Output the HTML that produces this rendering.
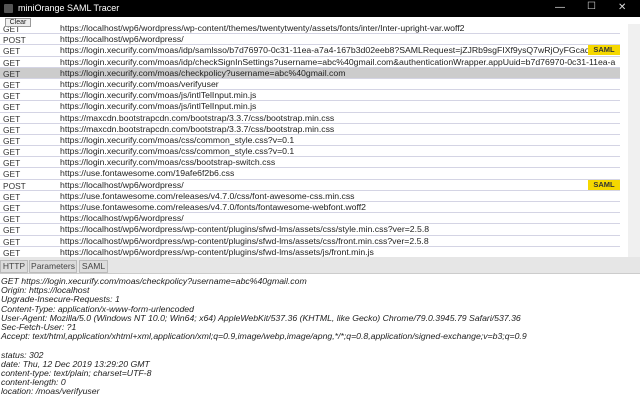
<!DOCTYPE html>
<html><head><style>
*{margin:0;padding:0;box-sizing:border-box}
body{width:640px;height:400px;overflow:hidden;background:#fff;font-family:"Liberation Sans",sans-serif;font-size:8px;color:#222;position:relative}
.title{position:absolute;left:0;top:0;width:640px;height:17px;background:#000;color:#fff;font-size:9px}
.title .ic{position:absolute;left:4px;top:4px;width:9px;height:9px;background:#555;border-radius:1px}
.title .t{position:absolute;left:18px;top:3px}
.ctl{position:absolute;top:2px;color:#ddd;font-size:10px}
.top{position:absolute;left:0;top:17px;width:640px;height:7px;background:#fff;z-index:2}
.clear{position:absolute;left:5px;top:18px;width:26px;height:9px;border:1px solid #999;background:#eee;font-size:7px;text-align:center;line-height:7px;z-index:3}
.list{position:absolute;left:0;top:23px;width:628px;height:234px;overflow:hidden}
.row{height:11.2px;border-bottom:1px solid #d4d4e4;position:relative;white-space:nowrap;width:620px;line-height:10px;overflow:hidden}
.row .m{position:absolute;left:3px;top:1px;color:#333;font-size:8.4px}
.row .u{position:absolute;left:60px;top:0;color:#222;font-size:8.7px}
.row.sel{background:#ccc}
.saml{position:absolute;right:0;top:0;width:32px;height:10px;background:#f5d800;color:#333;font-size:7.5px;text-align:center;line-height:10px;font-weight:bold}
.sb{position:absolute;left:628px;top:24px;width:12px;height:233px;background:#f0f0f0}
.tabs{position:absolute;left:0;top:257px;width:640px;height:17px;background:#e6e6e6;border-bottom:1px solid #ccc}
.tab{position:absolute;top:3px;height:13px;background:#ddd;border:1px solid #bbb;font-size:8.5px;line-height:11px;text-align:center;color:#444}
.det{position:absolute;left:1px;top:277px;font-style:italic;font-size:8.7px;line-height:9.2px;color:#222;white-space:pre}
</style></head><body>
<div class="title"><div class="ic"></div><div class="t">miniOrange SAML Tracer</div>
<div class="ctl" style="left:555px">—</div><div class="ctl" style="left:587px;top:1px">☐</div><div class="ctl" style="left:618px">✕</div></div>
<div class="top"></div>
<div class="clear">Clear</div>
<div class="list">
<div class="row"><span class="m">GET</span><span class="u">https://localhost/wp6/wordpress/wp-content/themes/twentytwenty/assets/fonts/inter/Inter-upright-var.woff2</span></div>
<div class="row"><span class="m">POST</span><span class="u">https://localhost/wp6/wordpress/</span></div>
<div class="row"><span class="m">GET</span><span class="u">https://login.xecurify.com/moas/idp/samlsso/b7d76970-0c31-11ea-a7a4-167b3d02eeb8?SAMLRequest=jZJRb9sgFIXf9ysQ7wRjOyFGcaqsU</span><span class="saml">SAML</span></div>
<div class="row"><span class="m">GET</span><span class="u">https://login.xecurify.com/moas/idp/checkSignInSettings?username=abc%40gmail.com&amp;authenticationWrapper.appUuid=b7d76970-0c31-11ea-a</span></div>
<div class="row sel"><span class="m">GET</span><span class="u">https://login.xecurify.com/moas/checkpolicy?username=abc%40gmail.com</span></div>
<div class="row"><span class="m">GET</span><span class="u">https://login.xecurify.com/moas/verifyuser</span></div>
<div class="row"><span class="m">GET</span><span class="u">https://login.xecurify.com/moas/js/intlTelInput.min.js</span></div>
<div class="row"><span class="m">GET</span><span class="u">https://login.xecurify.com/moas/js/intlTelInput.min.js</span></div>
<div class="row"><span class="m">GET</span><span class="u">https://maxcdn.bootstrapcdn.com/bootstrap/3.3.7/css/bootstrap.min.css</span></div>
<div class="row"><span class="m">GET</span><span class="u">https://maxcdn.bootstrapcdn.com/bootstrap/3.3.7/css/bootstrap.min.css</span></div>
<div class="row"><span class="m">GET</span><span class="u">https://login.xecurify.com/moas/css/common_style.css?v=0.1</span></div>
<div class="row"><span class="m">GET</span><span class="u">https://login.xecurify.com/moas/css/common_style.css?v=0.1</span></div>
<div class="row"><span class="m">GET</span><span class="u">https://login.xecurify.com/moas/css/bootstrap-switch.css</span></div>
<div class="row"><span class="m">GET</span><span class="u">https://use.fontawesome.com/19afe6f2b6.css</span></div>
<div class="row"><span class="m">POST</span><span class="u">https://localhost/wp6/wordpress/</span><span class="saml">SAML</span></div>
<div class="row"><span class="m">GET</span><span class="u">https://use.fontawesome.com/releases/v4.7.0/css/font-awesome-css.min.css</span></div>
<div class="row"><span class="m">GET</span><span class="u">https://use.fontawesome.com/releases/v4.7.0/fonts/fontawesome-webfont.woff2</span></div>
<div class="row"><span class="m">GET</span><span class="u">https://localhost/wp6/wordpress/</span></div>
<div class="row"><span class="m">GET</span><span class="u">https://localhost/wp6/wordpress/wp-content/plugins/sfwd-lms/assets/css/style.min.css?ver=2.5.8</span></div>
<div class="row"><span class="m">GET</span><span class="u">https://localhost/wp6/wordpress/wp-content/plugins/sfwd-lms/assets/css/front.min.css?ver=2.5.8</span></div>
<div class="row"><span class="m">GET</span><span class="u">https://localhost/wp6/wordpress/wp-content/plugins/sfwd-lms/assets/js/front.min.js</span></div>
</div>
<div class="sb"></div>
<div class="tabs">
<div class="tab" style="left:0px;width:28px">HTTP</div>
<div class="tab" style="left:29px;width:48px">Parameters</div>
<div class="tab" style="left:79px;width:29px">SAML</div>
</div>
<div class="det">GET https://login.xecurify.com/moas/checkpolicy?username=abc%40gmail.com
Origin: https://localhost
Upgrade-Insecure-Requests: 1
Content-Type: application/x-www-form-urlencoded
User-Agent: Mozilla/5.0 (Windows NT 10.0; Win64; x64) AppleWebKit/537.36 (KHTML, like Gecko) Chrome/79.0.3945.79 Safari/537.36
Sec-Fetch-User: ?1
Accept: text/html,application/xhtml+xml,application/xml;q=0.9,image/webp,image/apng,*/*;q=0.8,application/signed-exchange;v=b3;q=0.9

status: 302
date: Thu, 12 Dec 2019 13:29:20 GMT
content-type: text/plain; charset=UTF-8
content-length: 0
location: /moas/verifyuser</div>
</body></html>
